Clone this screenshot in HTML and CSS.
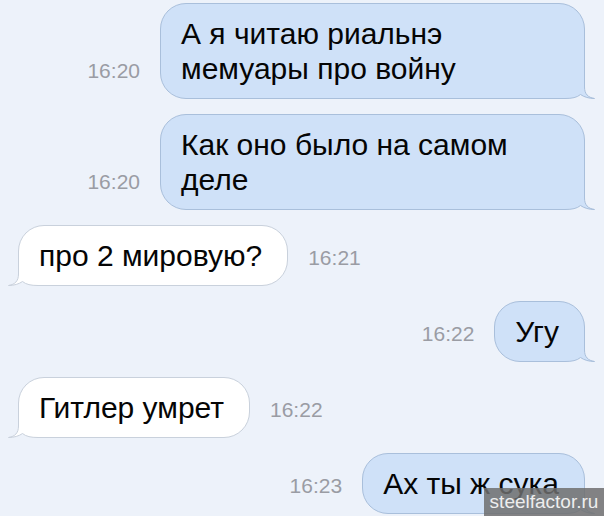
FILE: index.html
```html
<!DOCTYPE html>
<html lang="ru">
<head>
  <meta charset="UTF-8">
  <title>Сообщения</title>
  <link rel="stylesheet" href="styles.css">
</head>
<body>

  <div class="chat">

    <div class="row out">
      <span class="time">16:20</span>
      <div class="bubble wide">
        <span class="text">А я читаю риальнэ мемуары про войну</span>
        <svg class="tail" viewBox="0 0 40 30" width="40" height="30">
          <path class="tail-fill" d="M0 0 H29.5 V18 C29.5 25 33 28.5 39.5 29.5 C34 29.5 29 28 25.5 25.5 C22 28.5 17 29.5 10 29.5 H0 Z"/>
          <path class="tail-line" d="M29.5 0 V18 C29.5 25 33 28.5 39.5 29.5 C34 29.5 29 28 25.5 25.5 C22 28.5 17 29.5 10 29.5 H0"/>
        </svg>
      </div>
    </div>

    <div class="row out">
      <span class="time">16:20</span>
      <div class="bubble wide">
        <span class="text">Как оно было на самом деле</span>
        <svg class="tail" viewBox="0 0 40 30" width="40" height="30">
          <path class="tail-fill" d="M0 0 H29.5 V18 C29.5 25 33 28.5 39.5 29.5 C34 29.5 29 28 25.5 25.5 C22 28.5 17 29.5 10 29.5 H0 Z"/>
          <path class="tail-line" d="M29.5 0 V18 C29.5 25 33 28.5 39.5 29.5 C34 29.5 29 28 25.5 25.5 C22 28.5 17 29.5 10 29.5 H0"/>
        </svg>
      </div>
    </div>

    <div class="row in">
      <div class="bubble">
        <span class="text">про 2 мировую?</span>
        <svg class="tail" viewBox="0 0 40 30" width="40" height="30">
          <path class="tail-fill" d="M0 0 H29.5 V18 C29.5 25 33 28.5 39.5 29.5 C34 29.5 29 28 25.5 25.5 C22 28.5 17 29.5 10 29.5 H0 Z"/>
          <path class="tail-line" d="M29.5 0 V18 C29.5 25 33 28.5 39.5 29.5 C34 29.5 29 28 25.5 25.5 C22 28.5 17 29.5 10 29.5 H0"/>
        </svg>
      </div>
      <span class="time">16:21</span>
    </div>

    <div class="row out">
      <span class="time">16:22</span>
      <div class="bubble">
        <span class="text">Угу</span>
        <svg class="tail" viewBox="0 0 40 30" width="40" height="30">
          <path class="tail-fill" d="M0 0 H29.5 V18 C29.5 25 33 28.5 39.5 29.5 C34 29.5 29 28 25.5 25.5 C22 28.5 17 29.5 10 29.5 H0 Z"/>
          <path class="tail-line" d="M29.5 0 V18 C29.5 25 33 28.5 39.5 29.5 C34 29.5 29 28 25.5 25.5 C22 28.5 17 29.5 10 29.5 H0"/>
        </svg>
      </div>
    </div>

    <div class="row in">
      <div class="bubble">
        <span class="text">Гитлер умрет</span>
        <svg class="tail" viewBox="0 0 40 30" width="40" height="30">
          <path class="tail-fill" d="M0 0 H29.5 V18 C29.5 25 33 28.5 39.5 29.5 C34 29.5 29 28 25.5 25.5 C22 28.5 17 29.5 10 29.5 H0 Z"/>
          <path class="tail-line" d="M29.5 0 V18 C29.5 25 33 28.5 39.5 29.5 C34 29.5 29 28 25.5 25.5 C22 28.5 17 29.5 10 29.5 H0"/>
        </svg>
      </div>
      <span class="time">16:22</span>
    </div>

    <div class="row out">
      <span class="time">16:23</span>
      <div class="bubble">
        <span class="text">Ах ты ж сука</span>
        <svg class="tail" viewBox="0 0 40 30" width="40" height="30">
          <path class="tail-fill" d="M0 0 H29.5 V18 C29.5 25 33 28.5 39.5 29.5 C34 29.5 29 28 25.5 25.5 C22 28.5 17 29.5 10 29.5 H0 Z"/>
          <path class="tail-line" d="M29.5 0 V18 C29.5 25 33 28.5 39.5 29.5 C34 29.5 29 28 25.5 25.5 C22 28.5 17 29.5 10 29.5 H0"/>
        </svg>
      </div>
    </div>

  </div>

  <div class="watermark">steelfactor.ru</div>

</body>
</html>
```

FILE: styles.css
```css
html, body {
  margin: 0;
  height: 516px;
  overflow: hidden;
}

body {
  font-family: "Liberation Sans", Arial, sans-serif;
  background-color: #edf2fa;
  position: relative;
}

.chat {
  display: flex;
  flex-direction: column;
  gap: 15px;
  padding: 3px 19px 0 18px;
}

.row {
  display: flex;
  align-items: flex-end;
  gap: 20px;
}

.row.out {
  justify-content: flex-end;
}

.bubble {
  position: relative;
  box-sizing: border-box;
  max-width: 425px;
  padding: 12px 25px 12px 20px;
  font-size: 30px;
  line-height: 35px;
  color: #050505;
  border: 1px solid;
  border-radius: 26px;
}

.bubble.wide {
  width: 425px;
}

.text {
  position: relative;
  z-index: 1;
}

.out .bubble {
  background-color: #cfe1f8;
  border-color: #a9bfdb;
}

.in .bubble {
  background-color: #ffffff;
  border-color: #c9d1dc;
}

.tail {
  position: absolute;
  bottom: -1px;
  right: -11px;
  overflow: visible;
}

.in .tail {
  right: auto;
  left: -11px;
  transform: scaleX(-1);
}

.tail-fill {
  stroke: none;
}

.tail-line {
  fill: none;
  stroke-width: 1;
}

.out .tail-fill { fill: #cfe1f8; }
.out .tail-line { stroke: #a9bfdb; }
.in .tail-fill { fill: #ffffff; }
.in .tail-line { stroke: #c9d1dc; }

.time {
  font-size: 21px;
  line-height: 20px;
  color: #9a9ca4;
  margin-bottom: 18px;
}

.watermark {
  position: absolute;
  right: 0;
  bottom: 0;
  z-index: 2;
  width: 120px;
  height: 28px;
  background-color: rgba(110, 110, 110, 0.85);
  color: #eeeeee;
  font-size: 19px;
  line-height: 28px;
  text-align: center;
}
```
